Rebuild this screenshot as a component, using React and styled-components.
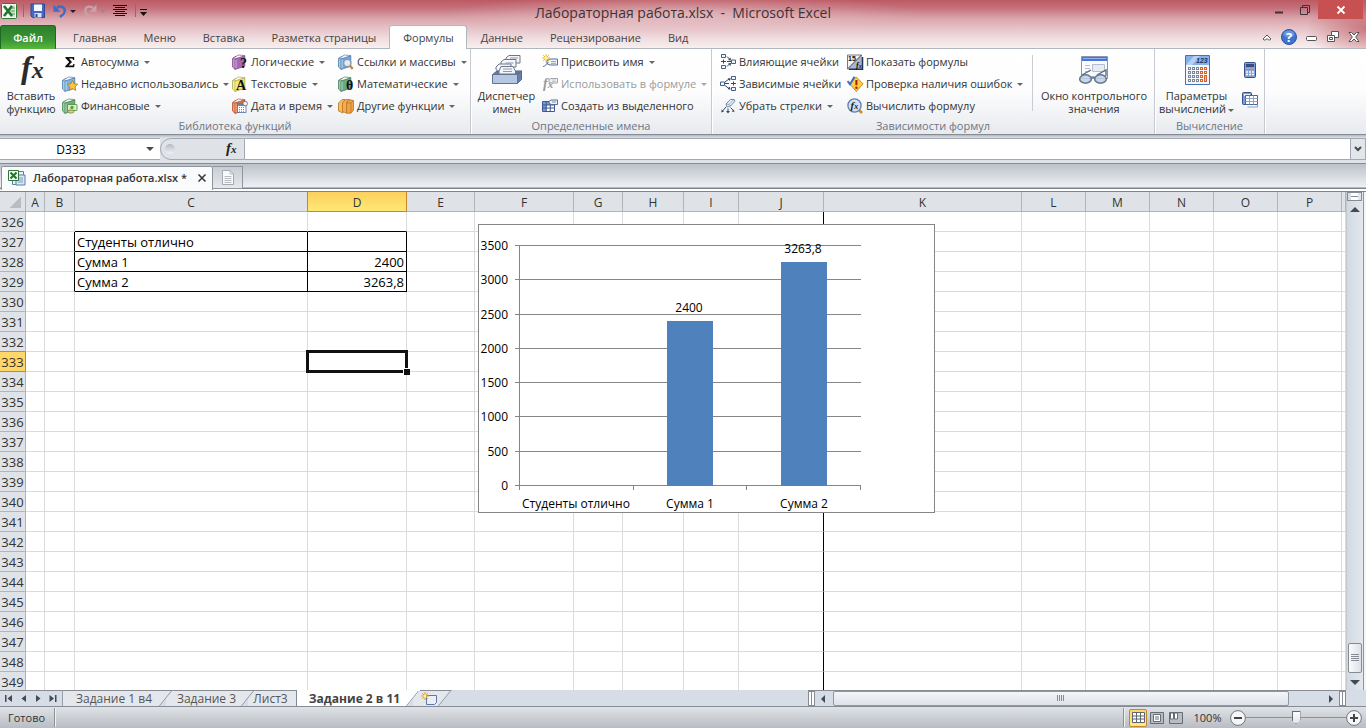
import React from "react";
import styled, { createGlobalStyle, css } from "styled-components";

const Global = createGlobalStyle`
  * { box-sizing: border-box; }
  html, body { margin: 0; padding: 0; }
  body {
    font-family: "Open Sans", "Noto Sans", sans-serif;
    font-size: 11px;
    color: #333;
    overflow: hidden;
  }
  button, input { font-family: inherit; font-size: inherit; color: inherit; margin: 0; }
  svg { display: block; flex: none; overflow: visible; }
`;

const Window = styled.div`
  display: flex;
  flex-direction: column;
  height: 100vh;
  background: #dfe3e8;
`;

/* ---------- Title bar and ribbon tabs ---------- */

const Frame = styled.header`
  background:
    radial-gradient(ellipse 60px 34px at 100% 60%, rgba(190, 90, 98, 0.7), rgba(190, 90, 98, 0) 100%),
    radial-gradient(ellipse 240px 18px at 50% 13px, rgba(245, 228, 230, 0.45), rgba(245, 228, 230, 0) 100%),
    linear-gradient(#bd5a63 0, #c4707a 8px, #d9a3aa 18px, #e3bcc1 26px, #f0dcdf 38px, #f7efef 48px);
  border-bottom: 1px solid #b1b7bf;
`;

const TitleBar = styled.div`
  display: grid;
  grid-template-columns: 1fr auto 1fr;
  height: 25px;
`;

const QuickAccess = styled.div`
  display: flex;
  align-items: center;
  padding-left: 1px;
  gap: 6px;
  height: 22px;
`;

const PlainButton = styled.button`
  display: flex;
  align-items: center;
  justify-content: center;
  border: 0;
  padding: 0;
  background: none;
`;

const Title = styled.h1`
  margin: 0;
  font-size: 14px;
  font-weight: 400;
  line-height: 25px;
  white-space: pre;
  color: #3d3336;
`;

const WindowButtons = styled.div`
  display: flex;
  justify-content: flex-end;
  height: 20px;
  padding-right: 3px;
`;

const WindowButton = styled(PlainButton)`
  width: ${(p) => (p.$close ? 45 : 26)}px;
  height: 19px;
  background: ${(p) => (p.$close ? "#c75050" : "none")};
`;

const TabRow = styled.nav`
  display: flex;
  height: 24px;
  margin-bottom: -1px;
`;

const FileTab = styled.button`
  width: 56px;
  border: 1px solid #1c6a1e;
  border-bottom: 0;
  border-radius: 3px 3px 0 0;
  background: linear-gradient(#2a7f2c, #3b9434 60%, #57b83c);
  color: #fff;
  font-weight: 600;
  padding: 0;
  margin-right: 3px;
`;

const RibbonTab = styled.button`
  border: 1px solid ${(p) => (p.$active ? "#b1b7bf" : "transparent")};
  border-bottom: 0;
  border-radius: 3px 3px 0 0;
  padding: 0 12px 0 13px;
  background: ${(p) => (p.$active ? "#fff" : "none")};
  color: #444;
  line-height: 14px;
  white-space: nowrap;
`;

const TabTools = styled.div`
  display: flex;
  align-items: center;
  gap: 9px;
  margin-left: auto;
  padding-right: 6px;
`;

/* ---------- Ribbon ---------- */

const Ribbon = styled.section`
  display: flex;
  height: 85px;
  background: linear-gradient(#fff, #fdfdfe 50%, #e7eaee);
`;

const Group = styled.div`
  display: flex;
  flex-direction: column;
  flex: none;
  width: ${(p) => p.$width}px;
  border-right: 1px solid #c6cad0;
  box-shadow: 1px 0 #fff;
`;

const GroupBody = styled.div`
  display: flex;
  height: 70px;
  padding-top: 2px;
  padding-left: ${(p) => (p.$indent ? 8 : 0)}px;
`;

const GroupName = styled.div`
  text-align: center;
  line-height: 14px;
  color: #6d7583;
`;

const Column = styled.div`
  display: flex;
  flex-direction: column;
  flex: none;
  width: ${(p) => p.$width}px;
`;

const Command = styled(PlainButton)`
  justify-content: flex-start;
  gap: 3px;
  height: 22px;
  line-height: 14px;
  white-space: nowrap;
  color: ${(p) => (p.disabled ? "#9a9a9a" : "#333")};
`;

const CommandLabel = styled.span`
  padding-bottom: 1px;
`;

const Caret = styled.span`
  display: inline-block;
  flex: none;
  border: 3px solid transparent;
  border-top-color: ${(p) => p.$color || "#666"};
  border-bottom: 0;
  margin-left: 2px;
  vertical-align: middle;
`;

const BigCommand = styled(PlainButton)`
  flex-direction: column;
  justify-content: flex-start;
  flex: none;
  width: ${(p) => p.$width}px;
  padding-top: 3px;
  gap: 3px;
  white-space: nowrap;
`;

const BigLabel = styled.span`
  display: flex;
  flex-direction: column;
  align-items: center;
  line-height: 13px;
`;

const IconColumn = styled.div`
  display: flex;
  flex-direction: column;
  justify-content: space-around;
  padding: 4px 0 4px 4px;
`;

const Divider = styled.div`
  width: 1px;
  margin: 4px 2px 8px 4px;
  background: #c9cdd3;
`;

/* ---------- Formula bar ---------- */

const FormulaBar = styled.section`
  display: flex;
  height: 30px;
  padding-top: 3px;
  border-top: 1px solid #868b94;
  border-bottom: 1px solid #868b94;
  background: linear-gradient(#b3b8c1, #dfe2e7 3px, #dfe3e8);
`;

const NameBox = styled.div`
  display: flex;
  align-items: center;
  justify-content: space-between;
  width: 160px;
  height: 22px;
  padding-right: 5px;
  border: 1px solid #a3a9b2;
  border-width: 1px 0;
  background: #fff;
`;

const NameInput = styled.input`
  width: 142px;
  height: 18px;
  border: 0;
  padding: 0;
  background: none;
  text-align: center;
  font-size: 12px;
  outline: 0;
  color: #000;
`;

const FxPart = styled.div`
  display: flex;
  align-items: center;
  justify-content: space-between;
  width: 85px;
  height: 22px;
  padding: 0 5px 0 4px;
  border: 1px solid #a3a9b2;
  border-radius: 11px 0 0 11px;
  background: #dfe3e8;
`;

const Knob = styled.span`
  width: 10px;
  height: 10px;
  border-radius: 50%;
  background: linear-gradient(#b6bac0, #f1f2f4);
`;

const FormulaInput = styled.input`
  flex: 1;
  min-width: 0;
  height: 22px;
  border: 1px solid #a3a9b2;
  border-width: 1px 0;
  background: #fff;
  outline: 0;
`;

const ExpandButton = styled(PlainButton)`
  width: 16px;
  height: 22px;
  border: 1px solid #a3a9b2;
  background: #e2e6ea;
`;

/* ---------- Workbook tabs ---------- */

const BookTabs = styled.nav`
  display: flex;
  align-items: flex-end;
  height: 28px;
  padding: 0 0 2px 1px;
  background: linear-gradient(#bcc1ca, #eef0f3 23px, #7d838c 24px, #7d838c 25px, #fff 25px, #fff 27px, #7d838c 27px);
`;

const BookTab = styled.div`
  display: flex;
  align-items: center;
  gap: 7px;
  width: 212px;
  height: 24px;
  padding: 0 5px 1px 6px;
  border: 1px solid #8f959e;
  border-bottom: 0;
  border-radius: 2px 2px 0 0;
  background: #fafbfc;
  font-weight: 600;
  line-height: 14px;
  white-space: nowrap;
`;

const BookClose = styled(PlainButton)`
  margin-left: auto;
`;

const NewBook = styled(PlainButton)`
  width: 30px;
  height: 23px;
  margin-bottom: 1px;
  border: 1px solid #8f959e;
  border-left: 0;
  background: linear-gradient(#c9cdd4, #e6e8ec);
`;

/* ---------- Sheet ---------- */

const SheetArea = styled.main`
  display: flex;
  flex: 1;
  min-height: 0;
`;

const GridView = styled.div`
  position: relative;
  flex: 1;
  min-width: 0;
  overflow: hidden;
  background: #fff;
`;

const Grid = styled.table`
  width: 100%;
  table-layout: fixed;
  border-collapse: separate;
  border-spacing: 0;
  color: #000;
  font-size: 13px;
`;

const headCell = css`
  height: 20px;
  padding: 2px 0 0;
  border: 0 solid #b1b5ba;
  border-width: 0 1px 1px 0;
  font-weight: 400;
  line-height: 17px;
  color: #333;
  background: #dfe3e8;
`;

const ColHead = styled.th`
  ${headCell}
  font-size: 12px;
  ${(p) => p.$beforeActive && css`border-right-color: #c9872b;`}
  ${(p) =>
    p.$active &&
    css`
      border-color: #c9872b;
      background: linear-gradient(#fdd05e, #fee875);
    `}
`;

const Corner = styled.td`
  ${headCell}
  background: linear-gradient(135deg, transparent 50%, #b9bdc2 50%) 9px 4px / 12px 12px no-repeat #dfe3e8;
`;

const RowHead = styled.th`
  ${headCell}
  ${(p) => p.$beforeActive && css`border-bottom-color: #c9872b;`}
  ${(p) =>
    p.$active &&
    css`
      border-color: #c9872b;
      background: #fed768;
    `}
`;

const Cell = styled.td`
  position: ${(p) => (p.$selected ? "relative" : "static")};
  height: 20px;
  padding: 2px 2px 0;
  border: 0 solid #d9dbdd;
  border-width: 0 1px 1px 0;
  ${(p) => p.$blackRight && css`border-right-color: #000;`}
  ${(p) => p.$blackBottom && css`border-bottom-color: #000;`}
  line-height: 17px;
  text-align: ${(p) => (p.$number ? "right" : "left")};
  white-space: nowrap;
`;

const Selection = styled.div`
  position: absolute;
  inset: -2px;
  border: 3px solid #111;

  &::after {
    content: "";
    position: absolute;
    right: -5px;
    bottom: -5px;
    width: 6px;
    height: 6px;
    border: solid #fff;
    border-width: 1px 0 0 1px;
    background: #111;
  }
`;

const ChartFrame = styled.figure`
  position: absolute;
  left: 478px;
  top: 32px;
  margin: 0;
  border: 1px solid #868686;
  background: #fff;
`;

const VScroll = styled.div`
  display: flex;
  flex-direction: column;
  align-items: center;
  flex: none;
  width: 20px;
  padding-right: 4px;
  border-left: 1px solid #c3c8cf;
  background: linear-gradient(90deg, #d3d9e1, #e3e8ee 16px, #8f959e 16px, #8f959e 17px, #f3f5f7 17px);
`;

const SplitBox = styled.div`
  width: 15px;
  height: 9px;
  border: 1px solid #868b94;
  background: linear-gradient(#fff 3px, #868b94 3px, #868b94 4px, #fff 4px);
  background-clip: content-box;
  padding: 0 3px;
  background-color: #fff;
`;

const ScrollArrow = styled(PlainButton)`
  width: 16px;
  height: 16px;
`;

const VThumb = styled.div`
  display: flex;
  align-items: center;
  justify-content: center;
  width: 14px;
  height: 30px;
  margin-top: auto;
  margin-bottom: 1px;
  border: 1px solid #868b94;
  border-radius: 2px;
  background: linear-gradient(90deg, #fafbfc, #dde1e7);
`;

/* ---------- Sheet tabs ---------- */

const BottomRow = styled.nav`
  display: flex;
  flex: none;
  height: 17px;
  border-bottom: 1px solid #868b94;
  background: #d6dde6;
`;

const SheetNav = styled.div`
  display: flex;
  align-items: center;
  justify-content: space-between;
  width: 63px;
  padding: 0 5px;
  border-top: 1px solid #868b94;
  border-right: 1px solid #9aa0a9;
`;

const SheetTab = styled.button`
  position: relative;
  width: ${(p) => p.$width}px;
  border: 0;
  border-top: 1px solid ${(p) => (p.$active ? "#fff" : "#868b94")};
  padding: 0 ${(p) => (p.$slant ? 16 : 12)}px 0 8px;
  background: ${(p) => (p.$active ? "#fff" : "#e4e8ed")};
  clip-path: ${(p) => (p.$slant ? "polygon(0 0, 100% 0, calc(100% - 13px) 100%, 0 100%)" : "none")};
  margin-right: ${(p) => (p.$slant ? -7 : 0)}px;
  z-index: ${(p) => p.$z};
  font-size: 12px;
  font-weight: ${(p) => (p.$active ? 700 : 400)};
  line-height: 15px;
  white-space: nowrap;
  color: ${(p) => (p.$active ? "#444" : "#555")};

  &::after {
    content: "";
    position: absolute;
    right: ${(p) => (p.$slant ? 7 : 0)}px;
    top: 0;
    bottom: 0;
    width: 1px;
    background: #8088a0;
    transform: ${(p) => (p.$slant ? "skewX(-39deg)" : "none")};
  }
`;

const TabLabel = styled.span`
  display: flex;
  justify-content: center;
`;

const HScroll = styled.div`
  display: flex;
  align-items: center;
  width: 538px;
  margin-left: auto;
  margin-right: 20px;
  border-top: 1px solid #868b94;
`;

const HSplit = styled.div`
  width: 7px;
  height: 15px;
  border: 1px solid #868b94;
  background: linear-gradient(90deg, #fff 2px, #868b94 2px, #868b94 3px, #fff 3px);
`;

const HTrack = styled.div`
  flex: 1;
  height: 16px;
  padding-left: 2px;
`;

const HThumb = styled.div`
  display: flex;
  align-items: center;
  justify-content: center;
  width: 93%;
  height: 15px;
  border: 1px solid #9097a1;
  border-radius: 2px;
  background: linear-gradient(#f4f6f9, #dde1e8);
`;

/* ---------- Status bar ---------- */

const StatusBar = styled.footer`
  display: flex;
  align-items: center;
  flex: none;
  height: 21px;
  padding: 0 4px 0 8px;
  background: linear-gradient(#dfe2e6, #b9bdc3);
`;

const StatusText = styled.span`
  width: 46px;
  line-height: 20px;
`;

const StatusSeparator = styled.span`
  width: 2px;
  height: 19px;
  border-left: 1px solid #8c9199;
  background: #f0f1f3;
`;

const StatusRight = styled.div`
  display: flex;
  align-items: center;
  gap: 4px;
  margin-left: auto;
`;

const ViewButtons = styled.div`
  display: flex;
  gap: 1px;
`;

const ViewButton = styled(PlainButton)`
  width: 18px;
  height: 18px;
  border: 1px solid ${(p) => (p.$active ? "#c08a2c" : "transparent")};
  border-radius: 2px;
  background: ${(p) => (p.$active ? "linear-gradient(#fdd766, #ffe98a)" : "none")};
`;

const ZoomValue = styled(PlainButton)`
  width: 37px;
`;

const ZoomControl = styled.div`
  display: flex;
  align-items: center;
`;

const ZoomSlider = styled.input`
  appearance: none;
  width: 100px;
  height: 16px;
  background: linear-gradient(#8c9199, #8c9199) 0 7px / 100% 1px no-repeat;

  &::-webkit-slider-thumb {
    appearance: none;
    width: 9px;
    height: 13px;
    background: linear-gradient(#fff, #dfe2e6);
    clip-path: polygon(0 0, 100% 0, 100% 70%, 50% 100%, 0 70%);
    box-shadow: inset 0 0 0 1px #666c75;
  }
`;

/* ---------- Icons ---------- */

const Icon = ({ size = 16, children }) => (
  <svg width={size} height={size} viewBox={`0 0 ${size} ${size}`} aria-hidden="true">
    {children}
  </svg>
);

const Book = ({ fill, side, line, children }) => (
  <Icon>
    <path d="M.5 4.6 4 2.2V13l-1 2.3L.5 13z" fill={side} stroke={line} strokeWidth=".8" />
    <path d="M.8 4.4 6.4 1l6.4.6L9.400 4.400 3 5z" fill="#fafafa" stroke={line} strokeWidth=".7" />
    <path d="M3 4.9 12.800 1.8v10.400L3 15.400z" fill={fill} stroke={line} strokeWidth=".8" />
    <path d="M4 5.600v8.800" stroke="#fff" strokeOpacity=".55" fill="none" />
    {children}
  </Icon>
);

const Letter = ({ x, y, size, children }) => (
  <text x={x} y={y} fontFamily="Liberation Serif" fontWeight="700" fontSize={size} fill="#111">
    {children}
  </text>
);

const FxText = ({ x, y, size, color = "#222", weight = 700 }) => (
  <text x={x} y={y} fontFamily="Liberation Serif" fontStyle="italic" fontWeight={weight} fill={color} fontSize={size}>
    f<tspan fontSize={Math.round(size * 0.75)}>x</tspan>
  </text>
);

const icons = {
  sum: <Icon><path d="M3.5 3h8.7v3h-1.2l-.5-1.4H7l3 3.4-3.3 3.6h4l.7-1.6h1.2l-.5 3.2H3.2v-1L7.2 8 3.4 4z" fill="#111" /></Icon>,
  recent: (
    <Book fill="#7db4dc" side="#a6cdea" line="#4a83b3">
      <path d="m10.5 4.5 1.6 3.3 3.6.4-2.6 2.5.6 3.7-3.2-1.8-3.2 1.8.6-3.7-2.6-2.5 3.6-.4z" fill="#ffc642" stroke="#bb7411" strokeWidth=".8" />
    </Book>
  ),
  finance: (
    <Book fill="#69ad79" side="#98cca2" line="#458b57">
      <rect x="5.5" y="6.5" width="9.500" height="6" rx=".5" fill="#d9efbd" stroke="#4f8b39" strokeWidth=".8" />
      <circle cx="10" cy="9.5" r="1.7" fill="#5f9c46" />
      <ellipse cx="9" cy="13.500" rx="3" ry="1.6" fill="#d5d48a" stroke="#6f7c2c" strokeWidth=".7" />
    </Book>
  ),
  logic: <Book fill="#a568b3" side="#c798d1" line="#7f4a8e"><Letter x={8} y={14} size={14}>?</Letter></Book>,
  text: <Book fill="#f0e66b" side="#f8f2a0" line="#b3aa3d"><Letter x={4} y={14} size={14}>A</Letter></Book>,
  date: (
    <Book fill="#e4703f" side="#f29a70" line="#b8502a">
      <rect x="5.5" y="5.5" width="8.5" height="9" fill="#fff" stroke="#4a6ea5" strokeWidth=".8" />
      <path d="M6 7h8" stroke="#5d86c5" strokeWidth="2" />
      <path d="M7 9.500h6M7 11.500h6M7 13.300h6" stroke="#6d8fc0" strokeDasharray="1 1" />
      <circle cx="13.2" cy="5.6" r="2.3" fill="#eef3fa" stroke="#666" strokeWidth=".8" />
    </Book>
  ),
  lookup: (
    <Book fill="#76a7d6" side="#a5c8e7" line="#4c7cad">
      <path d="m11.500 11.500 3.300 3.300" stroke="#c98536" strokeWidth="2.4" />
      <circle cx="9.3" cy="9" r="3.6" fill="#dcecfa" stroke="#8a96a4" strokeWidth="1.2" />
    </Book>
  ),
  math: <Book fill="#67a981" side="#98caa9" line="#46825d"><Letter x={8} y={14} size={14}>θ</Letter></Book>,
  more: (
    <Icon>
      <path d="M.5 5 4 1.500h3L5 5v10L.5 13z" fill="#f8bb65" stroke="#b7761c" strokeWidth=".8" />
      <path d="m4.500 5 3.200-3.500h3L8.500 5v10l-4-1.500z" fill="#f5ad50" stroke="#b7761c" strokeWidth=".8" />
      <path d="M8.500 5 11 1.500l4.500 1v9.500L13 15.200H8.500z" fill="#f0a046" stroke="#b7761c" strokeWidth=".8" />
      <path d="M8.500 5H13l2.500-2.500M13 5v10" stroke="#b7761c" strokeWidth=".7" fill="none" />
    </Icon>
  ),
  define: (
    <Icon>
      <path d="m5 6.500 3-1.500h7.500v6H8L5 9.800z" fill="#eef3f9" stroke="#5b6f92" />
      <path d="M9 7.500h5M9 9.300h5" stroke="#8493ad" strokeWidth=".8" />
      <path d="M1 12.500c3 0 3-3 5.500-4.200" stroke="#5b6f92" fill="none" />
      <path d="M4 0v8M0 4h8M1.200 1.200l5.600 5.600M6.800 1.200 1.200 6.800" stroke="#e8b11c" />
      <circle cx="4" cy="4" r="1.7" fill="#fff2a0" />
    </Icon>
  ),
  useName: (
    <Icon>
      <FxText x={1} y={12} size={14} color="#999" />
      <path d="m7 3.500 2-1h6.500v4.500H9l-2-1z" fill="#f1f1f1" stroke="#a5a5a5" />
      <path d="M10 4h4M10 5.500h4" stroke="#b5b5b5" strokeWidth=".7" />
    </Icon>
  ),
  create: (
    <Icon>
      <path d="M.5 3.500h12v10H.5z" fill="#fff" stroke="#3e588e" />
      <path d="M1 4h11v3H1zM1 4h3v9H1z" fill="#7b9bd0" />
      <path d="M.5 7h12M.5 10h12M4.300 3.500v10M8.300 3.500v10" stroke="#3e588e" />
      <path d="m7 3.500 2-1.500h6.500v4.500H9L7 5z" fill="#eef3f9" stroke="#5b6f92" />
      <path d="M10 4h4" stroke="#8493ad" />
    </Icon>
  ),
  precedents: (
    <Icon>
      <g fill="#f2f6fb" stroke="#455e8c"><path d="M1.500.5h4v3h-4zM1.500 11.500h4v3h-4zM11.500 6h4v3.500h-4z" /></g>
      <path d="M1 7.500h5M3.500 5.500v4M7 2.500l3 3M7 7.500h4M7 12.500l3-3" stroke="#35486d" fill="none" />
      <path d="M11 6.500 8 6l2.500-2.500zM11 9l-.5 3L8 9.500z" fill="#35486d" />
    </Icon>
  ),
  dependents: (
    <Icon>
      <g fill="#f2f6fb" stroke="#455e8c"><path d="M.5 6h4v3.500h-4zM11.500.5h4v3h-4zM11.500 11.500h4v3h-4z" /></g>
      <path d="M11 7.500h5M13.500 5.500v4M5 6l4-3M5 7.500h4M5 9.500l4 3" stroke="#35486d" fill="none" />
      <path d="m10.600 2-.6 3L7.600 2.500zM10.600 13.600l-3-.4L9.600 10.500z" fill="#35486d" />
    </Icon>
  ),
  removeArrows: (
    <Icon>
      <path d="m6 6 4.500-4.600 3.700.1.600 1.900L10.500 8 7 9z" fill="#eaf0f9" stroke="#7386ab" />
      <path d="m6 6 3 .4L13.400 2M9 6.400 10.500 8" stroke="#7386ab" fill="none" strokeWidth=".7" />
      <path d="M6 9 2.500 13M8 10.500V14M10.500 9.500l3 3.200" stroke="#35486d" />
      <path d="m1.300 14.400.3-3 2.400 2zM6 13h4l-2 2.600zM14.500 13.900l-2.800-.4 1.900-2.100z" fill="#35486d" />
    </Icon>
  ),
  show: (
    <Icon>
      <path d="M.5 1h14v14H.5z" fill="#f2f4f8" stroke="#6f7c95" />
      <path d="M15 1v14H1z" fill="#a9b6cc" />
      <path d="M2 15.300h13.500V3" stroke="#22335a" strokeWidth="1.500" fill="none" />
      <text x="1" y="7" fontSize="7" fontWeight="700" fontFamily="Liberation Sans" fill="#111">15</text>
      <FxText x={9} y={14} size={8} color="#111" />
      <path d="M14.500 1 1 14.500" stroke="#22335a" />
    </Icon>
  ),
  check: (
    <Icon>
      <path d="M9.300 1 16 7.800l-6.700 7.700-6.600-7.700z" fill="#ffcf3f" stroke="#c78b12" />
      <path d="M9.400 4v5.200" stroke="#a31f12" strokeWidth="2" /><circle cx="9.400" cy="11.800" r="1.200" fill="#a31f12" />
      <path d="M.6 5.200 3 8.200 7.500.8" stroke="#3f6fc0" strokeWidth="2" fill="none" />
    </Icon>
  ),
  evaluate: (
    <Icon>
      <path d="m12 12 3 3" stroke="#d58b23" strokeWidth="2.600" />
      <circle cx="7.500" cy="7.500" r="6.600" fill="#cfe2f6" stroke="#5d7fae" strokeWidth="1.300" />
      <FxText x={3.5} y={11} size={11} />
    </Icon>
  ),
  fxBig: <Icon size={32}><FxText x={6} y={24} size={32} color="#2b2b2b" /></Icon>,
  nameManager: (
    <Icon size={32}>
      <g fill="#f5f7fa" stroke="#6c7688">
        <path d="m15 4 3-2.500h11V9H18l-3-2.500z" /><path d="m10 8 3-2.500h12V13H13l-3-2.500z" /><path d="m5 13 3-3h12v8H8l-3-2.500z" />
      </g>
      <path d="M19 4h8M14.500 9h8M10 13.500h8M10 15.500h8" stroke="#8f99aa" />
      <path d="M1.500 20.500 6 17h24.500L26 20.500z" fill="#68799b" stroke="#56678b" />
      <path d="M26.500 20.500 30.500 17v8.500l-4 3.800z" fill="#6a7ea7" stroke="#56678b" />
      <path d="M1.500 20.500h25v9h-25z" fill="#b5c7e3" stroke="#5f7299" />
      <path d="m8 17 2-4.500h12L24.500 17v3H8z" fill="#f3f6fb" stroke="#6c7688" />
      <path d="M12 15h9M12 17.500h9" stroke="#8f99aa" />
    </Icon>
  ),
  watch: (
    <Icon size={32}>
      <path d="M3.500 2.500h26v22h-26z" fill="#fafbfd" stroke="#8795b0" />
      <path d="M4 3h25v4H4z" fill="#4a74d8" /><path d="M5 4.500h23" stroke="#8fb2f2" />
      <path d="M7 11.500h5M7 14.500h5M7 17.500h5M14.500 10.500h12v7h-12z" fill="#e7ebf2" stroke="#b3bdcf" />
      <path d="M4 21 13 16M19 21l9-5v6" stroke="#5b6b80" strokeWidth="1.400" fill="none" />
      <g fill="#bcd0e6" fillOpacity=".85" stroke="#66798f" strokeWidth="1.600"><ellipse cx="7.500" cy="25" rx="5.800" ry="4.200" /><ellipse cx="22.500" cy="25" rx="5.800" ry="4.200" /></g>
      <path d="M13 24c1-1.400 3-1.400 4 0" stroke="#66798f" strokeWidth="1.400" fill="none" />
    </Icon>
  ),
  calcOptions: (
    <Icon size={32}>
      <path d="M4.500 1.500h24v29h-24z" fill="#f3f6fb" stroke="#4472b8" />
      <path d="M5 2h23v9H5z" fill="#84b1ee" /><path d="m5 11 8-9h6l-8 9z" fill="#b4d2f8" />
      <text x="15" y="9" fontSize="7" fontStyle="italic" fontWeight="700" fontFamily="Liberation Sans" fill="#1e3560">123</text>
      <g fill="#fff" stroke="#7b8795">
        {[13.5, 17.5, 21.5, 25.5].map((y) => [7.5, 11.5, 15.5].map((x) => <rect key={`${x}-${y}`} x={x} y={y} width="2" height="2" />))}
      </g>
      <g fill="#fff" stroke="#d8622a">
        {[13.5, 17.5, 21.5].map((y) => [19.5, 23.5].map((x) => <rect key={`${x}-${y}`} x={x} y={y} width="2" height="2" />))}
        <rect x="19.500" y="25.500" width="2" height="2" /><rect x="23.500" y="21.500" width="2" height="6" fill="#f5b296" />
      </g>
    </Icon>
  ),
  calcNow: (
    <Icon>
      <rect x="2.500" y=".5" width="11" height="15" rx="1" fill="#7d9fdb" stroke="#34518c" />
      <path d="M4 2h8v3H4z" fill="#334d80" />
      <path d="M4 7.500h8M4 10h8M4 12.500h8" stroke="#fff" strokeWidth="1.500" strokeDasharray="2 1" />
      <path d="M4 7.500h8" stroke="#d9706a" strokeWidth="1.500" strokeDasharray="2 1" />
    </Icon>
  ),
  calcSheet: (
    <Icon>
      <rect x=".5" y=".5" width="9" height="12" rx="1" fill="#7d9fdb" stroke="#34518c" />
      <path d="M2 2h6v2H2z" fill="#e8effa" />
      <path d="M3.500 3.500h12v9h-12z" fill="#fff" stroke="#4a6391" />
      <path d="M3.500 6.500h12M3.500 9.500h12M7.500 3.500v9M11.500 3.500v9" stroke="#8ea2c7" />
      <path d="M5.500 15h10V13" stroke="#8aa0c7" fill="none" />
    </Icon>
  ),
  excel: (
    <Icon>
      <rect x=".5" y=".5" width="15" height="15" rx="1" fill="#f4faf2" stroke="#2d7a38" />
      <path d="M9 2h5v12H9z" fill="#cfe6cc" /><path d="M9.500 5h4.500M9.500 8h4.500M9.500 11h4.500" stroke="#5b9d5f" />
      <path d="m3 3 8 10M11 3 3 13" stroke="#237330" strokeWidth="2.600" />
    </Icon>
  ),
  save: (
    <Icon>
      <path d="M1 1h13.500v13.500H2.500L1 13z" fill="#4468c4" stroke="#2c4893" />
      <path d="M4 1.500h8V8H4z" fill="#f4f7fc" /><path d="M4.500 10h7v4.500h-7z" fill="#d9e1f0" /><path d="M5.500 11h2v3h-2z" fill="#2c4893" />
    </Icon>
  ),
  undo: (
    <Icon><path d="M5 4.800C9 2 13.400 4.500 12.700 8.400 12.300 11 10.500 12.500 7.800 13.800" stroke="#3d6dc7" strokeWidth="2.400" fill="none" /><path d="M1.500 1.500v7.200h7z" fill="#3d6dc7" /></Icon>
  ),
  redo: (
    <Icon><path d="M11 4.800C7 2 2.600 4.500 3.300 8.400c.4 2.600 2.200 4.100 4.900 5.400" stroke="#c4a3a9" strokeWidth="2.200" fill="none" /><path d="M14.500 1.500v7.200h-7z" fill="#c4a3a9" /></Icon>
  ),
  center: (
    <Icon><path d="M1 2.500h14M3 4.500h10M1 6.500h14M3 8.500h10M1 10.500h14M3 12.500h10" stroke="#111" /></Icon>
  ),
};

const Cmd = ({ icon, label, menu, disabled }) => (
  <Command type="button" disabled={disabled}>
    {icons[icon]}
    <CommandLabel>{label}</CommandLabel>
    {menu && <Caret $color={disabled ? "#aaa" : undefined} />}
  </Command>
);

const Big = ({ icon, lines, width, menu }) => (
  <BigCommand type="button" $width={width}>
    {icons[icon]}
    <BigLabel>
      <span>{lines[0]}</span>
      <span>{lines[1]}{menu && <Caret />}</span>
    </BigLabel>
  </BigCommand>
);

/* ---------- Data ---------- */

const ribbonTabs = ["Главная", "Меню", "Вставка", "Разметка страницы", "Формулы", "Данные", "Рецензирование", "Вид"];

const columns = [
  ["A", 19], ["B", 30], ["C", 233], ["D", 99], ["E", 68], ["F", 99], ["G", 49], ["H", 61], ["I", 55],
  ["J", 85], ["K", 198], ["L", 64], ["M", 64], ["N", 64], ["O", 64], ["P", 64],
];

const rows = Array.from({ length: 24 }, (_, i) => 326 + i);

const values = {
  C327: "Студенты отлично",
  C328: "Сумма 1",
  D328: "2400",
  C329: "Сумма 2",
  D329: "3263,8",
};

const isBlackRight = (col, row) => col === "J" || (row >= 327 && row <= 329 && "BCD".includes(col));
const isBlackBottom = (col, row) => row >= 326 && row <= 329 && "CD".includes(col);

const chartBars = [
  { label: "Студенты отлично", x: 97, value: 0 },
  { label: "Сумма 1", x: 211, value: 2400, text: "2400" },
  { label: "Сумма 2", x: 325, value: 3263.8, text: "3263,8" },
];

const chartY = (v) => Math.round(260 - (v * 240) / 3500);

const Chart = () => (
  <ChartFrame>
    <svg width="455" height="287" viewBox="0 0 455 287" fontSize="12" fill="#000" role="img" aria-label="Диаграмма">
      {[0, 500, 1000, 1500, 2000, 2500, 3000, 3500].map((v) => (
        <g key={v}>
          <path d={`M36 ${chartY(v) + 0.5}h346`} stroke="#868686" />
          <text x="29" y={chartY(v) + 5} textAnchor="end">{v}</text>
        </g>
      ))}
      <path d="M40.500 20v245M154.500 260v5M267.500 260v5M381.500 260v5" stroke="#868686" />
      {chartBars.map((b) => (
        <g key={b.label} textAnchor="middle">
          {b.value > 0 && <rect x={b.x - 23} y={chartY(b.value) + 1} width="46" height={260 - chartY(b.value)} fill="#4f81bd" />}
          {b.text && <text x={b.x - 1} y={chartY(b.value) - 8}>{b.text}</text>}
          <text x={b.x} y="283">{b.label}</text>
        </g>
      ))}
    </svg>
  </ChartFrame>
);

const Arrow = ({ d, w = 10, h = 10, fill = "#444a52" }) => (
  <svg width={w} height={h} viewBox={`0 0 ${w} ${h}`} aria-hidden="true"><path d={d} fill={fill} /></svg>
);

export default function App() {
  return (
    <Window>
      <Global />
      <Frame>
        <TitleBar>
          <QuickAccess>
            {icons.excel}
            <svg width="1" height="16" aria-hidden="true"><path d="M.5 1v13" stroke="#8d6a70" /></svg>
            <PlainButton type="button" aria-label="Сохранить">{icons.save}</PlainButton>
            <PlainButton type="button" aria-label="Отменить">{icons.undo}<Caret $color="#222" /></PlainButton>
            <PlainButton type="button" aria-label="Вернуть">{icons.redo}<Caret $color="#a58087" /></PlainButton>
            <PlainButton type="button" aria-label="По центру">{icons.center}</PlainButton>
            <PlainButton type="button" aria-label="Настройка панели">
              <svg width="13" height="16" aria-hidden="true"><path d="M1.500 1v13" stroke="#8d6a70" /><path d="M6 6.500h7" stroke="#111" /><path d="M6 9h7l-3.500 4z" fill="#111" /></svg>
            </PlainButton>
          </QuickAccess>
          <Title>{"Лабораторная работа.xlsx  -  Microsoft Excel"}</Title>
          <WindowButtons>
            <WindowButton type="button" aria-label="Свернуть"><svg width="10" height="10"><path d="M1 7.500h8" stroke="#3d3336" strokeWidth="2" /></svg></WindowButton>
            <WindowButton type="button" aria-label="Развернуть"><svg width="10" height="10"><path d="M.5 2.500h7v7h-7zM2.500 2V.5h7v7H8" stroke="#3d3336" fill="none" /></svg></WindowButton>
            <WindowButton type="button" aria-label="Закрыть" $close><svg width="10" height="10"><path d="m1.500 1.500 7 7M8.500 1.500l-7 7" stroke="#fff" strokeWidth="1.800" /></svg></WindowButton>
          </WindowButtons>
        </TitleBar>
        <TabRow>
          <FileTab type="button">Файл</FileTab>
          {ribbonTabs.map((t) => (
            <RibbonTab key={t} type="button" $active={t === "Формулы"}>{t}</RibbonTab>
          ))}
          <TabTools>
            <PlainButton type="button" aria-label="Свернуть ленту"><svg width="10" height="8"><path d="M1 6 5 2l4 4-1.500 1H6.500L5 5.500 3.500 7h-1z" fill="#fff" stroke="#555" /></svg></PlainButton>
            <PlainButton type="button" aria-label="Справка">
              <svg width="16" height="16"><circle cx="8" cy="8" r="7.500" fill="#3f74cf" stroke="#2b559f" /><ellipse cx="8" cy="5" rx="5.500" ry="3.500" fill="#86adec" fillOpacity=".6" /><text x="8" y="13" textAnchor="middle" fontSize="13" fontWeight="700" fill="#fff">?</text></svg>
            </PlainButton>
            <PlainButton type="button" aria-label="Свернуть окно"><svg width="12" height="10"><rect x=".5" y="4.500" width="10" height="4" rx="1" fill="#fff" stroke="#555" /></svg></PlainButton>
            <PlainButton type="button" aria-label="Восстановить окно"><svg width="12" height="12"><path d="M4.500.5h7v6h-7z" fill="#fff" stroke="#555" /><path d="M.5 4.500h7v6h-7z" fill="#fff" stroke="#555" /><path d="M2.500 6.500h3v2h-3z" fill="#fff" stroke="#555" /></svg></PlainButton>
            <PlainButton type="button" aria-label="Закрыть окно"><svg width="12" height="10"><path d="M1 .5h2.500L6 3l2.500-2.500H11L7.700 5l3.300 4.500H8.500L6 7 3.500 9.500H1L4.300 5z" fill="#fff" stroke="#555" /></svg></PlainButton>
          </TabTools>
        </TabRow>
      </Frame>

      <Ribbon>
        <Group $width={471}>
          <GroupBody>
            <Big icon="fxBig" lines={["Вставить", "функцию"]} width={62} />
            <Column $width={170}>
              <Cmd icon="sum" label="Автосумма" menu />
              <Cmd icon="recent" label="Недавно использовались" menu />
              <Cmd icon="finance" label="Финансовые" menu />
            </Column>
            <Column $width={106}>
              <Cmd icon="logic" label="Логические" menu />
              <Cmd icon="text" label="Текстовые" menu />
              <Cmd icon="date" label="Дата и время" menu />
            </Column>
            <Column $width={132}>
              <Cmd icon="lookup" label="Ссылки и массивы" menu />
              <Cmd icon="math" label="Математические" menu />
              <Cmd icon="more" label="Другие функции" menu />
            </Column>
          </GroupBody>
          <GroupName>Библиотека функций</GroupName>
        </Group>
        <Group $width={241}>
          <GroupBody>
            <Big icon="nameManager" lines={["Диспетчер", "имен"]} width={71} />
            <Column $width={168}>
              <Cmd icon="define" label="Присвоить имя" menu />
              <Cmd icon="useName" label="Использовать в формуле" menu disabled />
              <Cmd icon="create" label="Создать из выделенного" />
            </Column>
          </GroupBody>
          <GroupName>Определенные имена</GroupName>
        </Group>
        <Group $width={443}>
          <GroupBody $indent>
            <Column $width={127}>
              <Cmd icon="precedents" label="Влияющие ячейки" />
              <Cmd icon="dependents" label="Зависимые ячейки" />
              <Cmd icon="removeArrows" label="Убрать стрелки" menu />
            </Column>
            <Column $width={181}>
              <Cmd icon="show" label="Показать формулы" />
              <Cmd icon="check" label="Проверка наличия ошибок" menu />
              <Cmd icon="evaluate" label="Вычислить формулу" />
            </Column>
            <Divider />
            <Big icon="watch" lines={["Окно контрольного", "значения"]} width={118} />
          </GroupBody>
          <GroupName>Зависимости формул</GroupName>
        </Group>
        <Group $width={110}>
          <GroupBody>
            <Big icon="calcOptions" lines={["Параметры", "вычислений"]} width={83} menu />
            <IconColumn>
              <PlainButton type="button" aria-label="Пересчет">{icons.calcNow}</PlainButton>
              <PlainButton type="button" aria-label="Произвести вычисления">{icons.calcSheet}</PlainButton>
            </IconColumn>
          </GroupBody>
          <GroupName>Вычисление</GroupName>
        </Group>
      </Ribbon>

      <FormulaBar>
        <NameBox>
          <NameInput aria-label="Имя ячейки" defaultValue="D333" />
          <Arrow d="M1 1h8L5 5z" w={10} h={6} />
        </NameBox>
        <FxPart>
          <Knob />
          <PlainButton type="button" aria-label="Вставить функцию"><Icon><FxText x={3} y={12} size={15} /></Icon></PlainButton>
        </FxPart>
        <FormulaInput aria-label="Строка формул" />
        <ExpandButton type="button" aria-label="Развернуть строку формул">
          <svg width="8" height="6"><path d="m1 1 3 3 3-3" stroke="#444a52" strokeWidth="2" fill="none" /></svg>
        </ExpandButton>
      </FormulaBar>

      <BookTabs>
        <BookTab>
          <svg width="18" height="16" aria-hidden="true">
            <path d="M4.500 1.500h11v13h-11z" fill="#e8f0fa" stroke="#5c7fae" /><path d="M8 5h9v10H8z" fill="#d9e6f6" stroke="#5c7fae" /><path d="M10 8h5M10 10h5M10 12h5" stroke="#7f9fc8" />
            <path d="M.5.5h10v10H.5z" fill="#f3faf1" stroke="#2d7a38" /><path d="m2.500 2.500 6 6M8.500 2.500l-6 6" stroke="#237330" strokeWidth="2" />
          </svg>
          Лабораторная работа.xlsx *
          <BookClose type="button" aria-label="Закрыть книгу"><svg width="10" height="10"><path d="m1.500 1.500 7 7M8.500 1.500l-7 7" stroke="#333" strokeWidth="1.500" /></svg></BookClose>
        </BookTab>
        <NewBook type="button" aria-label="Новая книга">
          <svg width="12" height="15"><path d="M.5.5h7.500l3.500 3.500v10.500H.5z" fill="#fafafa" stroke="#a5a9af" /><path d="M8 .5V4h3.500M2.500 6.500h7M2.500 8.500h7M2.500 10.500h7M2.500 12.500h7" stroke="#b7bac0" fill="none" /></svg>
        </NewBook>
      </BookTabs>

      <SheetArea>
        <GridView>
          <Grid>
            <colgroup>
              <col width="26" />
              {columns.map(([name, w]) => <col key={name} width={w} />)}
              <col />
            </colgroup>
            <thead>
              <tr>
                <Corner />
                {columns.map(([name]) => (
                  <ColHead key={name} scope="col" $active={name === "D"} $beforeActive={name === "C"}>{name}</ColHead>
                ))}
                <ColHead as="td" />
              </tr>
            </thead>
            <tbody>
              {rows.map((row) => (
                <tr key={row}>
                  <RowHead scope="row" $active={row === 333} $beforeActive={row === 332}>{row}</RowHead>
                  {columns.map(([col]) => (
                    <Cell
                      key={col}
                      $number={col === "D"}
                      $selected={col === "D" && row === 333}
                      $blackRight={isBlackRight(col, row)}
                      $blackBottom={isBlackBottom(col, row)}
                    >
                      {values[col + row]}
                      {col === "D" && row === 333 && <Selection />}
                    </Cell>
                  ))}
                  <Cell />
                </tr>
              ))}
            </tbody>
          </Grid>
          <Chart />
        </GridView>
        <VScroll>
          <SplitBox />
          <ScrollArrow type="button" aria-label="Вверх"><Arrow d="M0 6 5 1l5 5z" h={7} /></ScrollArrow>
          <VThumb><svg width="8" height="8"><path d="M0 .5h8M0 2.500h8M0 4.500h8M0 6.500h8" stroke="#868b94" /></svg></VThumb>
          <ScrollArrow type="button" aria-label="Вниз"><Arrow d="M0 1h10L5 6z" h={7} /></ScrollArrow>
        </VScroll>
      </SheetArea>

      <BottomRow>
        <SheetNav>
          <PlainButton type="button" aria-label="Первый лист"><Arrow d="M0 1h1.500v7H0zM7 1v7L2.500 4.500z" w={8} h={9} /></PlainButton>
          <PlainButton type="button" aria-label="Предыдущий лист"><Arrow d="M5 1v7L.5 4.500z" w={6} h={9} /></PlainButton>
          <PlainButton type="button" aria-label="Следующий лист"><Arrow d="M1 1v7l4.500-3.500z" w={6} h={9} /></PlainButton>
          <PlainButton type="button" aria-label="Последний лист"><Arrow d="M6 1h1.500v7H6zM.5 1v7L5 4.500z" w={8} h={9} /></PlainButton>
        </SheetNav>
        <SheetTab type="button" $slant $width={110} $z={4}><TabLabel>Задание 1 в4</TabLabel></SheetTab>
        <SheetTab type="button" $slant $width={89} $z={3}><TabLabel>Задание 3</TabLabel></SheetTab>
        <SheetTab type="button" $width={49} $z={2}><TabLabel>Лист3</TabLabel></SheetTab>
        <SheetTab type="button" $slant $active $width={123} $z={4}><TabLabel>Задание 2 в 11</TabLabel></SheetTab>
        <SheetTab type="button" $slant $width={39} $z={2} aria-label="Новый лист">
          <svg width="16" height="14"><path d="M5.500 3.500h10v7l-2 2h-8z" fill="#e9eef7" stroke="#5f78a8" /><path d="M4 0v8M0 4h8M1.200 1.200l5.600 5.600M6.800 1.200 1.200 6.800" stroke="#e39a1c" /><circle cx="4" cy="4" r="1.500" fill="#fff2a0" /></svg>
        </SheetTab>
        <HScroll>
          <HSplit />
          <ScrollArrow type="button" aria-label="Влево"><Arrow d="M7 1v8L3 5z" /></ScrollArrow>
          <HTrack><HThumb><svg width="8" height="8"><path d="M.5 1v6M2.500 1v6M4.500 1v6M6.500 1v6" stroke="#868b94" /></svg></HThumb></HTrack>
          <ScrollArrow type="button" aria-label="Вправо"><Arrow d="M3 1v8l4-4z" /></ScrollArrow>
          <HSplit />
        </HScroll>
      </BottomRow>

      <StatusBar>
        <StatusText>Готово</StatusText>
        <StatusSeparator />
        <StatusRight>
          <StatusSeparator />
          <ViewButtons>
            <ViewButton type="button" aria-label="Обычный" $active><svg width="13" height="11"><path d="M.5.5h12v10H.5zM.5 4h12M.5 7h12M4.500.5v10M8.500.5v10" stroke="#5f6670" fill="#fff" /></svg></ViewButton>
            <ViewButton type="button" aria-label="Разметка страницы"><svg width="14" height="12"><path d="M.5.5h13v11H.5z" stroke="#666c75" fill="#b9bdc3" /><path d="M3.500 2.500h7v7h-7z" fill="#fff" stroke="#666c75" /><path d="M5 5h4M5 7h4" stroke="#666c75" /></svg></ViewButton>
            <ViewButton type="button" aria-label="Страничный режим"><svg width="14" height="12"><path d="M.5.5h13v11H.5z" stroke="#666c75" fill="#b9bdc3" /><path d="M1.500 1h3v6h-3zM5.500 1h3v6h-3z" fill="#fff" stroke="#666c75" /></svg></ViewButton>
          </ViewButtons>
          <ZoomValue type="button">100%</ZoomValue>
          <ZoomControl>
            <PlainButton type="button" aria-label="Уменьшить"><Icon><circle cx="8" cy="8" r="7.400" fill="#f5f6f7" stroke="#70767f" /><path d="M4 8h8" stroke="#444" strokeWidth="2" /></Icon></PlainButton>
            <ZoomSlider type="range" min="0" max="100" defaultValue="50" aria-label="Масштаб" />
            <PlainButton type="button" aria-label="Увеличить"><Icon><circle cx="8" cy="8" r="7.400" fill="#f5f6f7" stroke="#70767f" /><path d="M4 8h8M8 4v8" stroke="#444" strokeWidth="2" /></Icon></PlainButton>
          </ZoomControl>
        </StatusRight>
      </StatusBar>
    </Window>
  );
}
